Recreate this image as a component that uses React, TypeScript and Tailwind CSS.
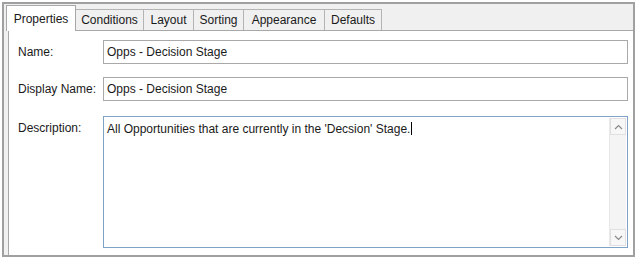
import React from "react";

const tabs = [
  { label: "Properties", w: "w-[70px]" },
  { label: "Conditions", w: "w-[68px]" },
  { label: "Layout", w: "w-[50px]" },
  { label: "Sorting", w: "w-[50px]" },
  { label: "Appearance", w: "w-[81px]" },
  { label: "Defaults", w: "w-[57px]" },
];

const TextBox = ({ value }: { value: string }) => (
  <div className="flex h-[24px] flex-1 items-center border border-[#a9a9a9] bg-white px-[3px] text-[12px] text-[#1a1a1a]">
    {value}
  </div>
);

const Chevron = ({ up }: { up?: boolean }) => (
  <svg width="9" height="6" viewBox="0 0 9 6" className={up ? "" : "rotate-180"}>
    <path d="M1 5 L4.5 1.5 L8 5" fill="none" stroke="#8a8a8a" strokeWidth="1.2" />
  </svg>
);

export default function App() {
  return (
    <div className="h-[261px] w-[638px] bg-white p-[2px] font-['Liberation_Sans',Arial,sans-serif]">
      <div className="flex h-[255px] w-[633px] flex-col border-2 border-[#a0a0a0] bg-[#f0f0f0]">
        {/* tab strip */}
        <div className="flex h-[26px] items-end pl-[2px]">
          {tabs.map((t, i) =>
            i === 0 ? (
              <div
                key={t.label}
                className={`relative z-10 -mb-px flex h-[26px] ${t.w} items-center justify-center border border-b-0 border-[#a8a8a8] bg-white text-[12px] text-[#1a1a1a]`}
              >
                {t.label}
              </div>
            ) : (
              <div
                key={t.label}
                className={`flex h-[21px] ${t.w} items-center justify-center border border-b-0 border-l-0 border-[#b4b4b4] bg-[#f0f0f0] text-[12px] text-[#1a1a1a]`}
              >
                {t.label}
              </div>
            )
          )}
        </div>

        {/* panel */}
        <div className="ml-[4px] flex flex-1 flex-col gap-[13px] border border-b-0 border-r-0 border-[#a8a8a8] bg-white pl-[9px] pr-[5px] pt-[9px]">
          <div className="flex items-center">
            <div className="w-[85px] text-[12px] text-[#1a1a1a]">Name:</div>
            <TextBox value="Opps - Decision Stage" />
          </div>
          <div className="flex items-center">
            <div className="w-[85px] text-[12px] text-[#1a1a1a]">Display Name:</div>
            <TextBox value="Opps - Decision Stage" />
          </div>
          <div className="mt-[2px] flex items-start">
            <div className="w-[85px] pt-[3px] text-[12px] text-[#1a1a1a]">Description:</div>
            <div className="flex h-[132px] flex-1 border border-[#7fa2c8] bg-white">
              <div className="flex-1 px-[3px] pt-[3px] text-[12px] text-[#1a1a1a]">
                All Opportunities that are currently in the 'Decsion' Stage.
                <span className="ml-px inline-block h-[13px] w-px translate-y-[2px] bg-black" />
              </div>
              <div className="m-[1px] flex w-[17px] flex-col border-l border-[#e8e8e8] bg-[#f4f4f4]">
                <div className="flex h-[17px] items-center justify-center border border-[#e0e0e0] bg-[#f7f7f7]">
                  <Chevron up />
                </div>
                <div className="flex-1" />
                <div className="flex h-[17px] items-center justify-center border border-[#e0e0e0] bg-[#f7f7f7]">
                  <Chevron />
                </div>
              </div>
            </div>
          </div>
        </div>
      </div>
    </div>
  );
}
